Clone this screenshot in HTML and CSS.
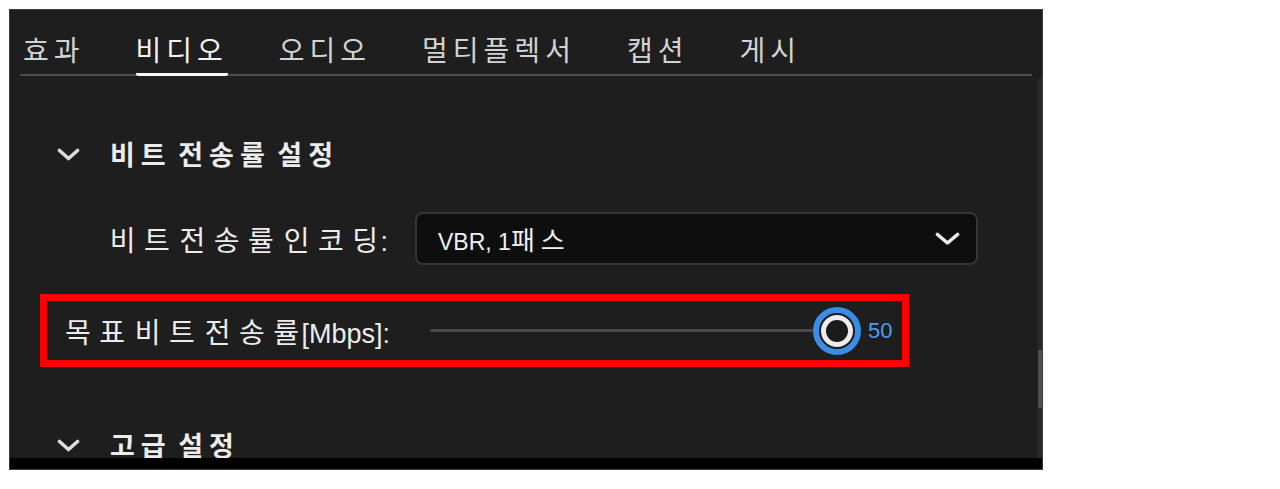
FILE: index.html
```html
<!DOCTYPE html>
<html lang="ko">
<head>
<meta charset="utf-8">
<title>비디오 설정</title>
<link rel="stylesheet" href="styles.css">
</head>
<body>
<div class="panel">
  <div class="main">
    <div class="content">
      <nav class="tabs">
        <span class="tab">효과</span>
        <span class="tab active">비디오</span>
        <span class="tab">오디오</span>
        <span class="tab">멀티플렉서</span>
        <span class="tab">캡션</span>
        <span class="tab">게시</span>
      </nav>

      <section class="group">
        <div class="group-head">
          <svg class="chev" width="23" height="13" viewBox="0 0 23 13"><polyline points="2.5,2.5 11.5,10.5 20.5,2.5" fill="none" stroke="#dcdcdc" stroke-width="3.6" stroke-linecap="round" stroke-linejoin="round"/></svg>
          <span class="group-title">비트 전송률 설정</span>
        </div>

        <div class="row">
          <span class="label"><span class="ko">비트 전송률 인코딩</span>:</span>
          <div class="select">
            <span class="select-value">VBR, 1<span class="ko-sm">패스</span></span>
            <svg width="25" height="14" viewBox="0 0 25 14"><polyline points="2.5,2.5 12.5,11 22.5,2.5" fill="none" stroke="#ececec" stroke-width="3.6" stroke-linecap="round" stroke-linejoin="round"/></svg>
          </div>
        </div>

        <div class="row highlight">
          <span class="label"><span class="ko">목표 비트 전송률</span>[Mbps]:</span>
          <div class="slider">
            <div class="track"></div>
            <div class="thumb"><div class="thumb-inner"></div></div>
            <span class="slider-value">50</span>
          </div>
        </div>
      </section>

      <section class="group second">
        <div class="group-head">
          <svg class="chev" width="23" height="13" viewBox="0 0 23 13"><polyline points="2.5,2.5 11.5,10.5 20.5,2.5" fill="none" stroke="#dcdcdc" stroke-width="3.6" stroke-linecap="round" stroke-linejoin="round"/></svg>
          <span class="group-title">고급 설정</span>
        </div>
      </section>
    </div>
    <div class="scrollbar"><div class="scroll-thumb"></div></div>
  </div>
  <div class="footer"></div>
</div>
</body>
</html>
```

FILE: styles.css
```css
body {
  margin: 0;
  background: #ffffff;
  font-family: "Noto Sans CJK KR", "Noto Sans", sans-serif;
}

.panel {
  margin: 9px 0 0 9px;
  width: 1034px;
  height: 461px;
  box-sizing: border-box;
  border: 1px solid #3c3c3c;
  background: #1e1e1e;
  display: flex;
  flex-direction: column;
}

.main {
  flex: 1;
  display: flex;
  min-height: 0;
}

.content {
  flex: 1;
  min-width: 0;
  overflow: hidden;
}

.scrollbar {
  width: 4px;
  margin-top: 69px;
  background: #292929;
  display: flex;
  flex-direction: column;
}

.scroll-thumb {
  margin-top: 271px;
  height: 58px;
  background: #4e4e4e;
}

.footer {
  height: 11px;
  background: #020202;
}

/* tabs */
.tabs {
  display: flex;
  height: 66px;
  margin: 0 6px 0 10px;
  padding-left: 3px;
  background: linear-gradient(#4d4d4d, #4d4d4d) left bottom / 100% 2px no-repeat;
}

.tab {
  box-sizing: border-box;
  height: 66px;
  padding-top: 21px;
  margin-right: 51px;
  font-size: 28px;
  line-height: 36px;
  letter-spacing: 5px;
  color: #d2d2d2;
  border-bottom: 3px solid transparent;
  white-space: nowrap;
}

.tab.active {
  color: #f4f4f4;
  border-bottom-color: #f4f4f4;
  border-radius: 0 0 2px 2px;
}

/* groups */
.group-head {
  display: flex;
  align-items: center;
  height: 40px;
  margin-top: 58px;
  padding-left: 47px;
}

.chev {
  margin-right: 30px;
  flex: none;
}

.group-title {
  font-size: 27px;
  font-weight: 700;
  letter-spacing: 6px;
  word-spacing: -7px;
  color: #ececec;
  line-height: 40px;
  white-space: nowrap;
}

.row {
  display: flex;
  align-items: center;
  margin-left: 55px;
  margin-top: 38px;
}

.label {
  width: 323px;
  flex: none;
  text-align: right;
  white-space: nowrap;
  font-family: "Liberation Sans", "Noto Sans CJK KR", sans-serif;
  font-size: 27px;
  color: #ededed;
}

.ko {
  font-family: "Noto Sans CJK KR", sans-serif;
  font-size: 28px;
  letter-spacing: 8.5px;
  word-spacing: -15px;
  margin-right: -6px;
}

.select {
  margin-left: 27px;
  width: 563px;
  height: 53px;
  box-sizing: border-box;
  border: 2px solid #353535;
  border-radius: 8px;
  background: #0e0e0e;
  display: flex;
  align-items: center;
  justify-content: space-between;
  padding: 0 16px 0 21px;
}

.select-value {
  font-family: "Liberation Sans", "Noto Sans CJK KR", sans-serif;
  font-size: 23px;
  color: #f2f2f2;
  white-space: nowrap;
}

.ko-sm {
  font-family: "Noto Sans CJK KR", sans-serif;
  font-size: 26px;
  letter-spacing: 6px;
}

.row.highlight {
  margin-left: 30px;
  margin-top: 29px;
  width: fit-content;
  height: 73px;
  box-sizing: border-box;
  border: 7px solid #ff0000;
  padding: 0 9px 0 18px;
}

.slider {
  display: flex;
  align-items: center;
  margin-left: 27px;
  padding-left: 15px;
}

.track {
  width: 383px;
  height: 3px;
  border-radius: 2px;
  background: #4a4a4a;
}

.thumb {
  width: 48px;
  height: 48px;
  box-sizing: border-box;
  border-radius: 50%;
  border: 6px solid #3a8de6;
  background: #1b1b1b;
  display: flex;
  align-items: center;
  justify-content: center;
}

.thumb-inner {
  width: 32px;
  height: 32px;
  box-sizing: border-box;
  border-radius: 50%;
  border: 5px solid #ececec;
  background: #1b1b1b;
}

.slider-value {
  margin-left: 7px;
  width: 25px;
  font-family: "Liberation Sans", sans-serif;
  font-size: 22px;
  color: #4a9ff2;
}
```
